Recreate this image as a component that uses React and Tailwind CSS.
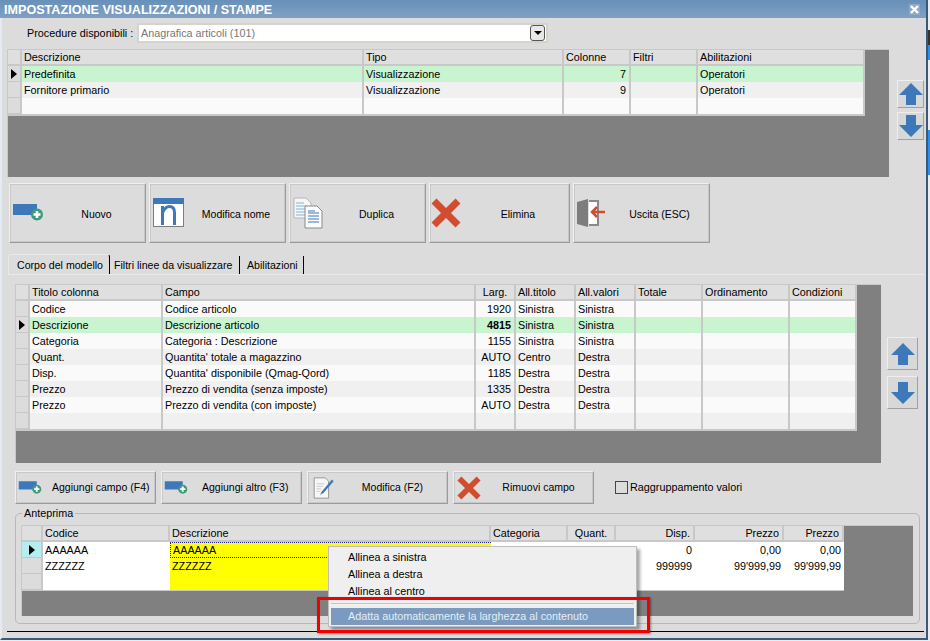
import React from 'react';

const font = "font-['Liberation_Sans',sans-serif]";

const PlusBar = ({ small }) => (
  <svg width={small ? 27 : 36} height={small ? 18 : 24} viewBox="0 0 36 24">
    <rect x="1" y="3" width="24" height="11" fill="#3d78b8" />
    <circle cx="25" cy="13.5" r="6" fill="#3f9a7a" />
    <path d="M21.5 13.5h7M25 10v7" stroke="#fff" strokeWidth="2.6" />
  </svg>
);

const NameIcon = () => (
  <svg width="32" height="30" viewBox="0 0 32 30">
    <rect x="0.5" y="0.5" width="30" height="28" fill="#fff" stroke="#7d7d7d" />
    <rect x="0" y="0" width="31" height="6" fill="#3d78b8" />
    <path d="M9.5 27V8M9.5 15c2-5 4.500-6.500 7-6.500 3.500 0 5 2.500 5 6V27" fill="none" stroke="#3d78b8" strokeWidth="3" />
  </svg>
);

const CopyIcon = () => (
  <svg width="30" height="32" viewBox="0 0 30 32">
    <path d="M1 1h12l5 5v15H1z" fill="#f7f7f7" stroke="#b5b5b5" />
    <path d="M3 6h8M3 9h11M3 12h11M3 15h11M3 18h11" stroke="#7db4e6" />
    <path d="M12 9h12l5 5v17H12z" fill="#fbfbfb" stroke="#8a8a8a" />
    <path d="M15 16h11M15 19h11M15 22h11M15 25h11M15 14h7" stroke="#3d78b8" />
  </svg>
);

const RedX = ({ size = 30 }) => (
  <svg width={size} height={size} viewBox="0 0 30 30">
    <path d="M3 3l24 24M27 3L3 27" stroke="#d24c30" strokeWidth="7" />
  </svg>
);

const DoorIcon = () => (
  <svg width="30" height="32" viewBox="0 0 30 32">
    <path d="M12 4h9v24h-9" fill="#fff" stroke="#8a8a8a" strokeWidth="2" />
    <path d="M0 5l11-3v28l-11-3z" fill="#7d7d7d" />
    <path d="M28 15H16M20 10l-5 5 5 5" fill="none" stroke="#d24c30" strokeWidth="2.5" />
  </svg>
);

const EditIcon = () => (
  <svg width="23" height="22" viewBox="0 0 24 26">
    <path d="M1 1h13l4 4v20H1z" fill="#f6f6f6" stroke="#8a8a8a" />
    <path d="M4 8h9M4 11h7M4 14h5M4 17h4" stroke="#c4c4c4" />
    <path d="M22 3L10 17l-2 4 4-2L24 5z" fill="#3d78b8" />
  </svg>
);

const ArrowUp = () => (
  <svg width="24" height="24" viewBox="0 0 24 24">
    <path d="M12 1L24 13H17V23H7V13H0z" fill="#3d78b8" />
  </svg>
);

const ArrowDown = () => (
  <svg width="24" height="24" viewBox="0 0 24 24">
    <path d="M12 23L24 11H17V1H7V11H0z" fill="#3d78b8" />
  </svg>
);

const Marker = () => (
  <svg width="6" height="10" viewBox="0 0 6 10"><path d="M0 0l6 5-6 5z" fill="#000" /></svg>
);

const Btn = ({ className, icon, label, textClass = 'flex-1 text-center' }) => (
  <button className={`flex items-center bg-[#dcdcdc] border border-[#f0f0f0] border-r-[#9a9a9a] border-b-[#9a9a9a] shadow-[inset_0_0_0_1px_#c8c8c8] text-black text-[10.5px] whitespace-nowrap ${className}`}>
    {icon}
    <span className={textClass}>{label}</span>
  </button>
);

const HeadCell = ({ children, align = '' }) => (
  <div className={`h-[16px] bg-[#dfdfdf] border-r-2 border-b-2 border-[#c8c8c8] px-[2px] leading-[15px] whitespace-nowrap overflow-hidden ${align}`}>{children}</div>
);

// griglia generica, colonne passate come classe
const Grid = ({ cols, head, rows, rightCols = [], centerHead = [], current, boldCell }) => (
  <div className={`grid ${cols} w-max`}>
    <div className="h-[16px] bg-[#dfdfdf] border-r-2 border-b-2 border-[#c8c8c8]" />
    {head.map((h, i) => <HeadCell key={i} align={centerHead.includes(i) ? 'text-center' : ''}>{h}</HeadCell>)}
    {rows.map((row, r) => (
      <React.Fragment key={r}>
        <div className="h-[16px] flex items-center justify-center border-r-2 border-b border-[#c8c8c8] bg-[#dcdcdc]">
          {r === current && <Marker />}
        </div>
        {row.map((c, i) => (
          <div
            key={i}
            className={`h-[16px] px-[2px] leading-[16px] border-r-2 border-[#c8c8c8] whitespace-nowrap overflow-hidden ${rightCols.includes(i) ? 'text-right pr-[3px]' : ''} ${r === current ? 'bg-[#c8f5d0]' : r % 2 ? 'bg-[#f0f0f0]' : 'bg-[#fafafa]'} ${boldCell === i && r === current ? 'font-bold' : ''}`}
          >
            {c}
          </div>
        ))}
      </React.Fragment>
    ))}
  </div>
);

const models = [
  ['Predefinita', 'Visualizzazione', '7', '', 'Operatori'],
  ['Fornitore primario', 'Visualizzazione', '9', '', 'Operatori'],
  ['', '', '', '', ''],
];

const fields = [
  ['Codice', 'Codice articolo', '1920', 'Sinistra', 'Sinistra', '', '', ''],
  ['Descrizione', 'Descrizione articolo', '4815', 'Sinistra', 'Sinistra', '', '', ''],
  ['Categoria', 'Categoria : Descrizione', '1155', 'Sinistra', 'Sinistra', '', '', ''],
  ['Quant.', "Quantita' totale a magazzino", 'AUTO', 'Centro', 'Destra', '', '', ''],
  ['Disp.', "Quantita' disponibile (Qmag-Qord)", '1185', 'Destra', 'Destra', '', '', ''],
  ['Prezzo', 'Prezzo di vendita (senza imposte)', '1335', 'Destra', 'Destra', '', '', ''],
  ['Prezzo', 'Prezzo di vendita (con imposte)', 'AUTO', 'Destra', 'Destra', '', '', ''],
  ['', '', '', '', '', '', '', ''],
];

const previewHead = ['Codice', 'Descrizione', 'Categoria', 'Quant.', 'Disp.', 'Prezzo', 'Prezzo'];
const previewRows = [
  ['AAAAAA', 'AAAAAA', '', '', '0', '0,00', '0,00'],
  ['ZZZZZZ', 'ZZZZZZ', '', '', '999999', "99'999,99", "99'999,99"],
  ['', '', '', '', '', '', ''],
];

const previewCell = (r, i) => {
  if (i === 1 && r === 0) return 'bg-[#ffff00] border-y border-l border-dotted border-[#22228a] leading-[14px]';
  if (i === 1) return 'bg-[#ffff00] leading-[16px]';
  if (i > 3) return 'bg-white text-right pr-[3px] leading-[16px]';
  return 'bg-white leading-[16px]';
};

const previewHeadAlign = (i) => {
  if (i > 3) return 'text-right pr-[3px]';
  if (i === 3) return 'text-center';
  return '';
};

const Preview = () => (
  <div className="grid grid-cols-[21px_127px_321px_77px_48px_79px_89px_60px] w-max">
    <div className="h-[16px] bg-[#dfdfdf] border-r-2 border-b-2 border-[#c8c8c8]" />
    {previewHead.map((h, i) => <HeadCell key={i} align={previewHeadAlign(i)}>{h}</HeadCell>)}
    {previewRows.map((row, r) => (
      <React.Fragment key={r}>
        <div className={`h-[16px] flex items-center justify-center border-r-2 border-b border-[#c8c8c8] ${r === 0 ? 'bg-[#b4eef0]' : 'bg-[#dcdcdc]'}`}>
          {r === 0 && <Marker />}
        </div>
        {row.map((c, i) => (
          <div key={i} className={`h-[16px] px-[2px] whitespace-nowrap overflow-hidden ${previewCell(r, i)}`}>
            {c}
          </div>
        ))}
      </React.Fragment>
    ))}
    <div className="col-span-8 h-[1px] bg-[#c8c8c8]" />
  </div>
);

const sideBtn = 'flex items-center justify-center bg-[#d8d8d8] border border-[#eeeeee] border-r-[#a0a0a0] border-b-[#a0a0a0]';

export default function App() {
  return (
    <div className={`relative w-[930px] h-[641px] overflow-hidden bg-[#e8edf2] text-[10.8px] text-black ${font}`}>
      <div className="w-[928px] h-[640px] bg-[#dcdcdc] border-l-2 border-l-[#e4ebf2] border-r-2 border-b-2 border-r-[#3c5a78] border-b-[#3c5a78]">
        {/* barra titolo */}
        <div className="-ml-[2px] w-[926px] h-[18px] flex items-center justify-between pl-[4px] pr-[6px] bg-gradient-to-b from-[#6890b8] to-[#80a0c4] text-white font-bold text-[12.6px]">
          <span className="pt-[2px]">IMPOSTAZIONE VISUALIZZAZIONI / STAMPE</span>
          <span className="w-[11px] h-[11px] flex items-center justify-center bg-[#8eaaca]">
            <svg width="9" height="9" viewBox="0 0 9 9"><path d="M1 1l7 7M8 1L1 8" stroke="#fff" strokeWidth="2.4" /></svg>
          </span>
        </div>

        <div className="flex items-center h-[20px] mt-[5px] ml-[25px]">
          <span className="w-[110px] whitespace-nowrap pt-[1px]">Procedure disponibili :</span>
          <div className="w-[411px] h-[20px] bg-white border-2 border-[#d4d4cc] flex items-center justify-between pl-[2px] pr-[1px] text-[#777]">
            <span className="pt-[1px]">Anagrafica articoli (101)</span>
            <span className="w-[15px] h-[16px] flex items-center justify-center bg-[#e8e8e8] border border-[#555] rounded-[3px]">
              <span className="w-0 h-0 border-x-[4px] border-t-[4px] border-x-transparent border-t-black" />
            </span>
          </div>
        </div>

        {/* griglia modelli */}
        <div className="flex mt-[6px] ml-[5px]">
          <div className="w-[882px] h-[128px] bg-[#808080] border-t border-l border-[#c8c8c8]">
            <div className="border-b-2 border-[#c8c8c8] w-max">
              <Grid
                cols="grid-cols-[14px_342px_200px_67px_67px_167px]"
                head={['Descrizione', 'Tipo', 'Colonne', 'Filtri', 'Abilitazioni']}
                rows={models}
                rightCols={[2]}
                current={0}
              />
            </div>
          </div>
          <div className="flex flex-col gap-[4px] ml-[8px] mt-[31px]">
            <button className={`w-[27px] h-[28px] ${sideBtn}`}><ArrowUp /></button>
            <button className={`w-[27px] h-[28px] ${sideBtn}`}><ArrowDown /></button>
          </div>
        </div>

        {/* pulsanti principali */}
        <div className="flex gap-[3px] mt-[6px] ml-[7px]">
          <Btn className="w-[137px] h-[60px] pl-[2px]" icon={<PlusBar />} label="Nuovo" textClass="flex-1 text-center pt-[3px]" />
          <Btn className="w-[137px] h-[60px] pl-[3px]" icon={<NameIcon />} label="Modifica nome" textClass="flex-1 text-center pt-[3px] pl-[2px]" />
          <Btn className="w-[137px] h-[60px] pl-[3px]" icon={<CopyIcon />} label="Duplica" textClass="flex-1 text-center pt-[3px] pl-[5px]" />
          <Btn className="w-[141px] h-[60px] pl-[1px]" icon={<RedX />} label="Elimina" textClass="flex-1 text-center pt-[3px] pl-[6px]" />
          <Btn className="w-[137px] h-[60px] pl-[3px]" icon={<DoorIcon />} label="Uscita (ESC)" textClass="flex-1 text-center pt-[3px] pl-[3px]" />
        </div>

        {/* tab */}
        <div className="flex items-end h-[20px] mt-[12px] ml-[6px] border-b border-[#e8e8e8] w-[917px] whitespace-nowrap text-[10.6px]">
          <div className="h-[20px] w-[102px] pl-[8px] border-t border-l border-[#e8e8e8] border-r border-r-black leading-[20px] rounded-t-[3px]">Corpo del modello</div>
          <div className="h-[18px] w-[130px] pl-[4px] border-r border-black leading-[19px]">Filtri linee da visualizzare</div>
          <div className="h-[18px] w-[64px] pl-[7px] border-r border-black leading-[19px]">Abilitazioni</div>
        </div>

        {/* griglia campi */}
        <div className="flex mt-[9px] ml-[13px]">
          <div className="w-[866px] h-[179px] bg-[#808080] border-t border-l border-[#c8c8c8]">
            <div className="border-b-2 border-[#c8c8c8] w-max">
              <Grid
                cols="grid-cols-[14px_133px_313px_40px_60px_60px_67px_87px_67px]"
                head={['Titolo colonna', 'Campo', 'Larg.', 'All.titolo', 'All.valori', 'Totale', 'Ordinamento', 'Condizioni']}
                rows={fields}
                rightCols={[2]}
                centerHead={[2]}
                current={1}
                boldCell={2}
              />
            </div>
          </div>
          <div className="flex flex-col gap-[6px] ml-[6px] mt-[53px]">
            <button className={`w-[31px] h-[33px] ${sideBtn}`}><ArrowUp /></button>
            <button className={`w-[31px] h-[33px] ${sideBtn}`}><ArrowDown /></button>
          </div>
        </div>

        {/* pulsanti campi */}
        <div className="flex items-center gap-[5px] mt-[8px] ml-[13px]">
          <Btn className="w-[141px] h-[33px] pl-[2px]" icon={<PlusBar small />} label="Aggiungi campo (F4)" textClass="ml-[7px] pt-[1px]" />
          <Btn className="w-[141px] h-[33px] pl-[2px]" icon={<PlusBar small />} label="Aggiungi altro (F3)" textClass="ml-[11px] pt-[1px]" />
          <Btn className="w-[141px] h-[33px] pl-[4px]" icon={<EditIcon />} label="Modifica (F2)" textClass="flex-1 text-center pl-[3px] pt-[1px]" />
          <Btn className="w-[141px] h-[33px] pl-[3px]" icon={<RedX size={24} />} label="Rimuovi campo" textClass="flex-1 text-center pl-[3px] pt-[1px]" />
          <label className="flex items-center ml-[16px] whitespace-nowrap">
            <span className="w-[13px] h-[13px] bg-[#dcdcdc] border border-[#1f4e79]" />
            <span className="ml-[2px]">Raggruppamento valori</span>
          </label>
        </div>

        {/* anteprima */}
        <fieldset className="w-[905px] h-[118px] mt-[2px] ml-[13px] border border-[#b8b8b8] rounded-[5px] px-[5px]">
          <legend className="ml-[1px] px-[2px] leading-[14px]">Anteprima</legend>
          <div className="w-[892px] h-[91px] mt-[5px] bg-[#808080] border-t border-l border-[#c8c8c8]">
            <Preview />
          </div>
        </fieldset>

        <div className="ml-[5px] w-[917px] h-[1px] mt-[7px] bg-black" />
      </div>

      {/* finestra sotto, visibile sul bordo destro */}
      <div className="absolute right-0 top-[30px] w-[2px] h-[15px] bg-[#333]" />
      <div className="absolute right-0 top-[45px] w-[2px] h-[15px] bg-[#2d8cf0]" />
      <div className="absolute right-0 top-[130px] w-[2px] h-[45px] bg-[#2d8cf0]" />

      {/* menu contestuale */}
      <div className="absolute left-[328px] top-[546px] w-[309px] h-[81px] bg-[#efefef] border border-[#bdbdbd] shadow-[3px_3px_3px_rgba(0,0,0,0.35)] p-[2px]">
        <div className="h-[17px] pl-[17px] leading-[17px]">Allinea a sinistra</div>
        <div className="h-[17px] pl-[17px] leading-[17px]">Allinea a destra</div>
        <div className="h-[17px] pl-[17px] leading-[17px]">Allinea al centro</div>
        <div className="h-[1px] bg-[#c4c4c4] mt-[3px] mb-[4px]" />
        <div className="h-[17px] pl-[17px] leading-[17px] bg-[#7a9bbf] text-[#e6edf5]">Adatta automaticamente la larghezza al contenuto</div>
      </div>

      {/* evidenziazione rossa */}
      <div className="absolute left-[317px] top-[597px] w-[333px] h-[36px] border-[3px] border-[#f00000] shadow-[1px_1px_2px_rgba(0,0,0,0.4)]" />
    </div>
  );
}
